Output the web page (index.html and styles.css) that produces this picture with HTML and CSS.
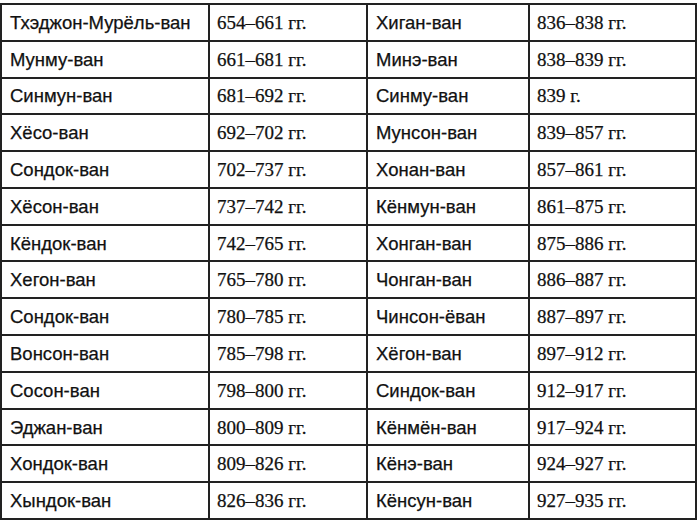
FILE: index.html
```html
<!DOCTYPE html>
<html lang="ru">
<head>
<meta charset="utf-8">
<link rel="stylesheet" href="styles.css">
</head>
<body>
<div class="grid">
  <div class="cell name">Тхэджон-Мурёль-ван</div><div class="cell date">654–661 гг.</div><div class="cell name">Хиган-ван</div><div class="cell date">836–838 гг.</div>
  <div class="cell name">Мунму-ван</div><div class="cell date">661–681 гг.</div><div class="cell name">Минэ-ван</div><div class="cell date">838–839 гг.</div>
  <div class="cell name">Синмун-ван</div><div class="cell date">681–692 гг.</div><div class="cell name">Синму-ван</div><div class="cell date">839 г.</div>
  <div class="cell name">Хёсо-ван</div><div class="cell date">692–702 гг.</div><div class="cell name">Мунсон-ван</div><div class="cell date">839–857 гг.</div>
  <div class="cell name">Сондок-ван</div><div class="cell date">702–737 гг.</div><div class="cell name">Хонан-ван</div><div class="cell date">857–861 гг.</div>
  <div class="cell name">Хёсон-ван</div><div class="cell date">737–742 гг.</div><div class="cell name">Кёнмун-ван</div><div class="cell date">861–875 гг.</div>
  <div class="cell name">Кёндок-ван</div><div class="cell date">742–765 гг.</div><div class="cell name">Хонган-ван</div><div class="cell date">875–886 гг.</div>
  <div class="cell name">Хегон-ван</div><div class="cell date">765–780 гг.</div><div class="cell name">Чонган-ван</div><div class="cell date">886–887 гг.</div>
  <div class="cell name">Сондок-ван</div><div class="cell date">780–785 гг.</div><div class="cell name">Чинсон-ёван</div><div class="cell date">887–897 гг.</div>
  <div class="cell name">Вонсон-ван</div><div class="cell date">785–798 гг.</div><div class="cell name">Хёгон-ван</div><div class="cell date">897–912 гг.</div>
  <div class="cell name">Сосон-ван</div><div class="cell date">798–800 гг.</div><div class="cell name">Синдок-ван</div><div class="cell date">912–917 гг.</div>
  <div class="cell name">Эджан-ван</div><div class="cell date">800–809 гг.</div><div class="cell name">Кёнмён-ван</div><div class="cell date">917–924 гг.</div>
  <div class="cell name">Хондок-ван</div><div class="cell date">809–826 гг.</div><div class="cell name">Кёнэ-ван</div><div class="cell date">924–927 гг.</div>
  <div class="cell name">Хындок-ван</div><div class="cell date">826–836 гг.</div><div class="cell name">Кёнсун-ван</div><div class="cell date">927–935 гг.</div>
</div>
</body>
</html>
```
FILE: styles.css
```css
html, body {
  margin: 0;
  padding: 0;
  background: #fff;
}
body {
  padding-top: 3px;
}
.grid {
  width: 697px;
  height: 517px;
  box-sizing: border-box;
  display: grid;
  grid-template-columns: 206px 156px 160px 165px;
  grid-template-rows: repeat(14, 1fr);
  gap: 2px;
  padding: 2px;
  background: #222;
}
.cell {
  background: #fff;
  display: flex;
  align-items: center;
  padding-left: 8px;
  padding-top: 1px;
  color: #111;
  white-space: nowrap;
  -webkit-text-stroke: 0.25px #111;
}
.name {
  font-family: "Liberation Sans", Arial, sans-serif;
  font-size: 18.5px;
}
.date {
  font-family: "Liberation Serif", "Times New Roman", serif;
  font-size: 19px;
  padding-left: 7px;
}
```
